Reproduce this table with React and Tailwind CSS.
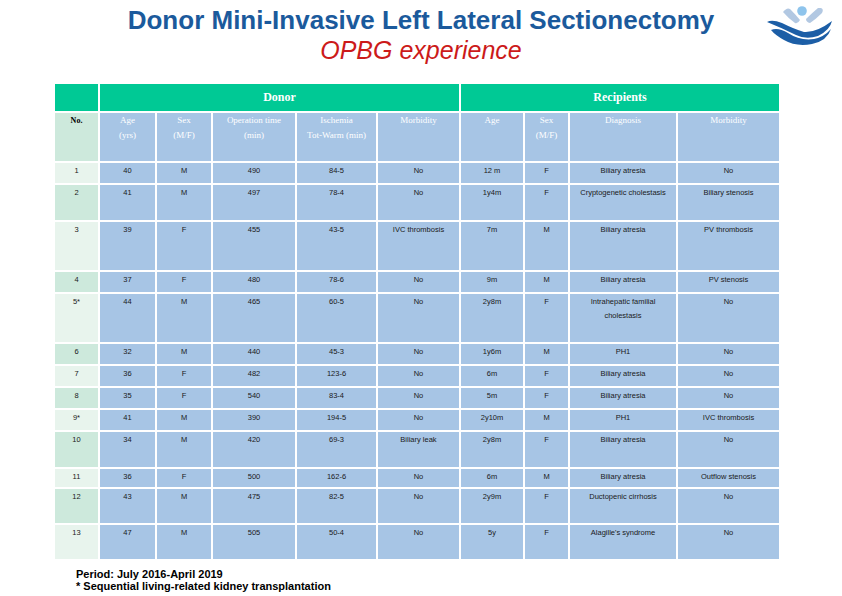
import React from 'react';

const rows = [
  ['1', '40', 'M', '490', '84-5', 'No', '12 m', 'F', 'Biliary atresia', 'No'],
  ['2', '41', 'M', '497', '78-4', 'No', '1y4m', 'F', 'Cryptogenetic cholestasis', 'Biliary stenosis'],
  ['3', '39', 'F', '455', '43-5', 'IVC thrombosis', '7m', 'M', 'Biliary atresia', 'PV thrombosis'],
  ['4', '37', 'F', '480', '78-6', 'No', '9m', 'M', 'Biliary atresia', 'PV stenosis'],
  ['5*', '44', 'M', '465', '60-5', 'No', '2y8m', 'F', 'Intrahepatic familial cholestasis', 'No'],
  ['6', '32', 'M', '440', '45-3', 'No', '1y6m', 'M', 'PH1', 'No'],
  ['7', '36', 'F', '482', '123-6', 'No', '6m', 'F', 'Biliary atresia', 'No'],
  ['8', '35', 'F', '540', '83-4', 'No', '5m', 'F', 'Biliary atresia', 'No'],
  ['9*', '41', 'M', '390', '194-5', 'No', '2y10m', 'M', 'PH1', 'IVC thrombosis'],
  ['10', '34', 'M', '420', '69-3', 'Biliary leak', '2y8m', 'F', 'Biliary atresia', 'No'],
  ['11', '36', 'F', '500', '162-6', 'No', '6m', 'M', 'Biliary atresia', 'Outflow stenosis'],
  ['12', '43', 'M', '475', '82-5', 'No', '2y9m', 'F', 'Ductopenic cirrhosis', 'No'],
  ['13', '47', 'M', '505', '50-4', 'No', '5y', 'F', "Alagille's syndrome", 'No'],
];

const subHeads = [
  ['Age', '(yrs)'],
  ['Sex', '(M/F)'],
  ['Operation time', '(min)'],
  ['Ischemia', 'Tot-Warm (min)'],
  ['Morbidity'],
  ['Age'],
  ['Sex', '(M/F)'],
  ['Diagnosis'],
  ['Morbidity'],
];

// OPBG logo: figure with raised arms over an open hand
const Logo = () => (
  <svg width="82" height="50" viewBox="0 0 82 50" className="absolute top-0 right-0">
    <path d="M23 12 Q27 7 30 9 Q36 15 40 20 Q38 24 35 23 Q28 18 23 12 Z" fill="#b2c8e2" />
    <path d="M61 8 Q64 9 62 13 Q56 19 50 23 Q46 22 46 19 Q52 13 58 8 Z" fill="#b2c8e2" />
    <circle cx="42" cy="11" r="4.8" fill="#8ec4ec" />
    <path d="M7 22 Q12 19 22 23 Q34 29 44 32 Q56 33 72 21 Q70 30 58 36 Q46 40 36 35 Q22 28 7 22 Z" fill="#1c5ea6" />
    <path d="M11 30 Q18 27 28 33 Q40 41 54 39 Q64 37 71 29 Q67 41 52 44 Q36 47 24 40 Q15 35 11 30 Z" fill="#1c5ea6" />
  </svg>
);

export default function App() {
  return (
    <div className="relative w-[842px] h-[596px] bg-white overflow-hidden">
      <Logo />
      <div className="pt-[5px] text-center">
        <div className="text-[26px] leading-[30px] font-bold text-[#1b5a9c]" style={{ fontFamily: '"Liberation Sans", Arial, sans-serif' }}>
          Donor Mini-Invasive Left Lateral Sectionectomy
        </div>
        <div className="mt-[1px] text-[25px] leading-[28px] italic text-[#cc1a1a]" style={{ fontFamily: '"Liberation Sans", Arial, sans-serif' }}>
          OPBG experience
        </div>
      </div>

      <div
        className="ml-[55px] mt-[20px] grid gap-[2px] grid-cols-[43px_55px_54px_82px_79px_81px_62px_43px_106px_101px] grid-rows-[27px_48px_20px_35px_48px_20px_48px_20px_20px_20px_20px_35px_18px_34px_34px]"
      >
        <div className="bg-[#00c995]" />
        <div className="col-span-5 bg-[#00c995] flex justify-center pt-[4px] text-white text-[12px] font-bold font-['Liberation_Serif',serif]">
          Donor
        </div>
        <div className="col-span-4 bg-[#00c995] flex justify-center pt-[4px] text-white text-[12px] font-bold font-['Liberation_Serif',serif]">
          Recipients
        </div>

        <div className="bg-[#cde9dc] text-center text-[8px] leading-[15px] font-bold text-black font-['Liberation_Serif',serif]">
          No.
        </div>
        {subHeads.map((h, i) => (
          <div key={i} className="bg-[#a7c5e5] text-center text-[9px] leading-[15px] text-white font-['Liberation_Serif',serif]">
            {h.map((l, j) => (
              <div key={j}>{l}</div>
            ))}
          </div>
        ))}

        {rows.map((r, ri) => (
          <React.Fragment key={ri}>
            {r.map((c, ci) => (
              <div
                key={ci}
                className={
                  'text-center text-[7.5px] leading-[14px] pt-[1px] text-[#1a1a1a] font-["Liberation_Sans",sans-serif] ' +
                  (ci === 0 ? (ri % 2 === 0 ? 'bg-[#e8f4ed]' : 'bg-[#cde9dc]') : 'bg-[#a7c5e5]') +
                  (ci === 8 ? ' px-[10px]' : '')
                }
              >
                {c}
              </div>
            ))}
          </React.Fragment>
        ))}
      </div>

      <div className="ml-[76px] mt-[9px] text-[11px] leading-[12px] font-bold text-black" style={{ fontFamily: '"Liberation Sans", Arial, sans-serif' }}>
        <div>Period: July 2016-April 2019</div>
        <div>* Sequential living-related kidney transplantation</div>
      </div>
    </div>
  );
}
